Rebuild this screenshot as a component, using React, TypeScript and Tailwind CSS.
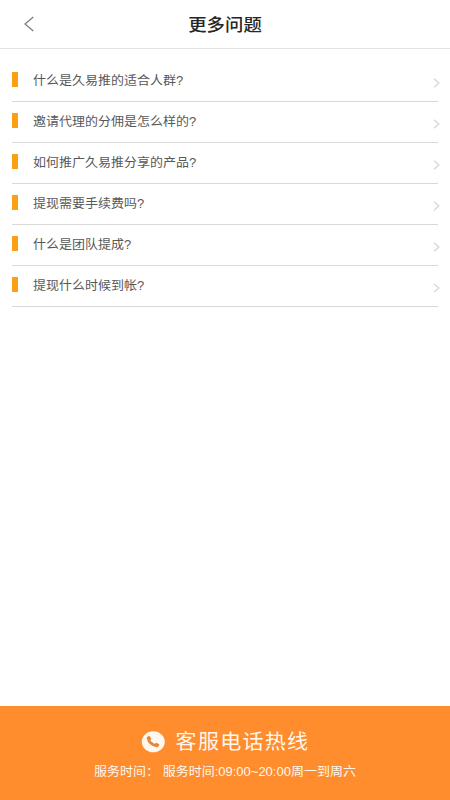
const questions = [
  '什么是久易推的适合人群?',
  '邀请代理的分佣是怎么样的?',
  '如何推广久易推分享的产品?',
  '提现需要手续费吗?',
  '什么是团队提成?',
  '提现什么时候到帐?',
];

function QuestionRow({ text }: { text: string }) {
  return (
    <li className="flex h-[41px] items-center border-b border-[#d9d9d9]">
      <span className="mb-[3px] h-[15px] w-[6px] shrink-0 bg-[#f9a112]" />
      <span className="ml-[15px] flex-1 scale-y-[.94] text-[13px] leading-5 text-[#585858]">{text}</span>
      <svg className="mt-[4px] -mr-[2px] h-[10px] w-[7px]" viewBox="0 0 7 10" fill="none" stroke="#d8d8d8" strokeWidth="1.4">
        <path d="M1 .7 5.8 5 1 9.3" />
      </svg>
    </li>
  );
}

export default function App() {
  return (
    <div className="flex h-[800px] w-[450px] flex-col bg-white font-['Liberation_Sans','Noto_Sans_CJK_SC',sans-serif]">
      <header className="grid h-[49px] shrink-0 grid-cols-[1fr_auto_1fr] items-center border-b border-[#e2e2e2]">
        <svg className="ml-[24px] h-[16px] w-[10px]" viewBox="0 0 10 16" fill="none" stroke="#808080" strokeWidth="1.4">
          <path d="M9.300 1 1 8l8.300 7" />
        </svg>
        <h1 className="mt-[2px] scale-y-[.93] text-[18.4px] leading-6 font-medium text-[#262626]">更多问题</h1>
      </header>
      <ul className="flex-1 pt-[12px] pr-[12px] pl-[12px]">
        {questions.map((q) => (
          <QuestionRow key={q} text={q} />
        ))}
      </ul>
      <footer className="flex h-[94px] shrink-0 flex-col items-center bg-[#ff8c2d] pt-[22px] text-[#fff8ee]">
        <div className="flex h-[27px] items-center">
          <svg className="h-[22px] w-[24px]" viewBox="0 0 24 22">
            <ellipse cx="12.300" cy="10.800" rx="11.5" ry="10.5" fill="#fff8f0" />
            <path
              d="M6.200 6 7.800 5Q8.400 4.700 8.800 5.300L10.200 7.500Q10.500 8 10 8.500L9.200 9.300Q11 11.800 13.800 13L14.800 12Q15.300 11.600 15.800 11.900L18 13.200Q18.600 13.600 18.200 14.200L17.200 15.800Q16.500 16.500 15.500 16.300Q7.200 14.500 5.700 7.200Q5.600 6.400 6.200 6Z"
              fill="#e78639"
            />
          </svg>
          <span className="ml-[11px] scale-y-[.95] text-[21px] leading-[27px] tracking-[1.3px]">客服电话热线</span>
        </div>
        <p className="mt-[7px] scale-y-[.92] text-[13px] leading-5 whitespace-pre">服务时间： 服务时间:09:00~20:00周一到周六</p>
      </footer>
    </div>
  );
}
